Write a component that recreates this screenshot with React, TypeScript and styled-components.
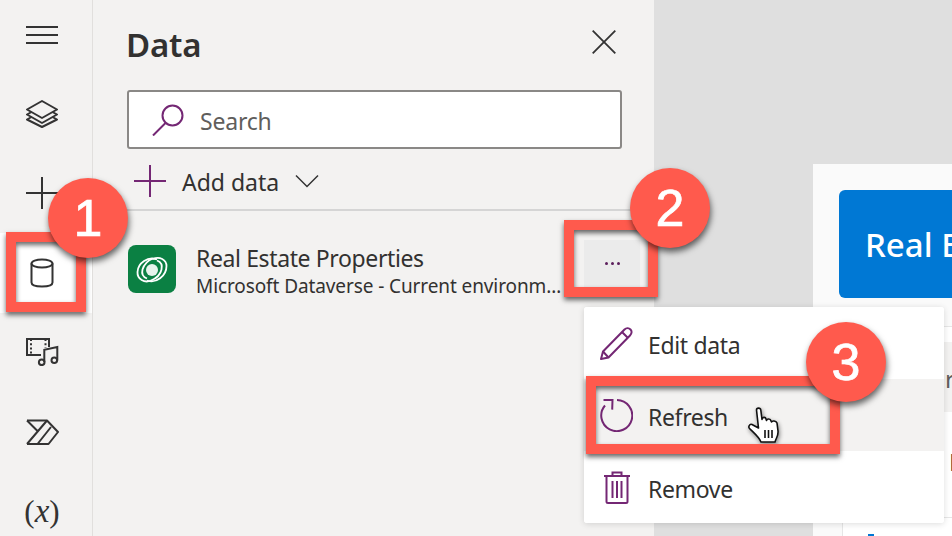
import React from 'react';
import styled, {createGlobalStyle} from 'styled-components';

const GlobalStyle = createGlobalStyle`
html, body {
    margin: 0;
    padding: 0;
    height: 536px;
    overflow: hidden;
    background: #dfdfdf;
    font-family: "Noto Sans", "Open Sans", sans-serif;
    color: #323130;
}
* { box-sizing: border-box; }
`

const INK = '#333333';
const PURPLE = '#742774';

const HamburgerIcon = () => (
    <svg width="32" height="18" viewBox="0 0 32 18" fill="none" stroke={INK} strokeWidth="1.8">
        <path d="M0 1h32M0 9h32M0 17h32"/>
    </svg>
);
const LayersIcon = () => (
    <svg width="32" height="28" viewBox="0 0 32 28" fill="none" stroke={INK} strokeWidth="2" strokeLinejoin="round">
        <path d="M16 1 31 9.500 16 18 1 9.500z"/>
        <path d="M5.500 12 1 14.500 16 23l15-8.500-4.500-2.500"/>
        <path d="M5.500 17 1 19.500 16 27l15-7.500-4.500-2.500"/>
    </svg>
);
const PlusIcon = ({color = INK}: {color?: string}) => (
    <svg width="32" height="32" viewBox="0 0 32 32" fill="none" stroke={color} strokeWidth="2">
        <path d="M0 16h32M16 0v32"/>
    </svg>
);
const CylinderIcon = () => (
    <svg width="24" height="30" viewBox="0 0 24 30" fill="none" stroke={INK} strokeWidth="2">
        <ellipse cx="12" cy="5.500" rx="10.500" ry="4"/>
        <path d="M1.500 5.500v19c0 2.500 4.500 4 10.500 4s10.500-1.500 10.500-4v-19"/>
    </svg>
);
const MediaIcon = () => (
    <svg width="33" height="28" viewBox="0 0 33 28" fill="none" stroke={INK} strokeWidth="2">
        <path d="M23 9V1H1v16h14"/>
        <path d="M5 1v16M19.500 1v9" strokeDasharray="2 2.200"/>
        <circle cx="15.700" cy="24.300" r="2.800"/>
        <circle cx="28.300" cy="22.300" r="2.800"/>
        <path d="M18.300 24V11.700L31.300 9v13.500"/>
    </svg>
);
const FlowIcon = () => (
    <svg width="33" height="26" viewBox="0 0 33 26" fill="none" stroke={INK} strokeWidth="2" strokeLinejoin="round">
        <path d="M1 1.500h20L32 13l-9.500 12H1"/>
        <path d="M1 1.500 12.500 13M21 1.500 1 25M11.500 25 25 8"/>
    </svg>
);
const SearchIcon = () => (
    <svg width="32" height="32" viewBox="0 0 32 32" fill="none" stroke={PURPLE} strokeWidth="2">
        <circle cx="20.500" cy="11.500" r="10"/>
        <path d="M13.500 19 1 31.500"/>
    </svg>
);
const ChevronIcon = () => (
    <svg width="24" height="14" viewBox="0 0 24 14" fill="none" stroke={INK} strokeWidth="1.500">
        <path d="M1 1.500 12 12.500 23 1.500"/>
    </svg>
);
const CloseIcon = () => (
    <svg width="24" height="24" viewBox="0 0 24 24" fill="none" stroke={INK} strokeWidth="1.800">
        <path d="M.7.7l22.600 22.600M23.300.7.700 23.300"/>
    </svg>
);
const DataverseLogo = () => (
    <svg width="48" height="48" viewBox="0 0 48 48" fill="none">
        <rect width="48" height="48" rx="8" fill="#0b8043"/>
        <circle cx="24" cy="25" r="6" fill="#fff" fillOpacity=".9"/>
        <g stroke="#fff" strokeWidth="1.800" fill="none">
            <path d="M29 14.500C20 11 10 18 9.500 27c-.4 7 7 11.500 13.500 8.500"/>
            <path d="M19 35.500C28 39 38.500 31 38.500 21c0-6.500-7-10-13.500-7"/>
            <path d="M25 13.500c-5 2-9 6-10.500 11-1 4 .5 7.500 4.500 9M23 35.500c5-2 9.500-6 10.500-11 1-4-.5-7.500-4.500-9"/>
        </g>
    </svg>
);
const PencilIcon = () => (
    <svg width="33" height="33" viewBox="0 0 33 33" fill="none" stroke={PURPLE} strokeWidth="2" strokeLinejoin="round">
        <path d="M8.500 30.500 1 32l2-7.500L24.500 2.500c2-2 4.500-1.500 6 0s1.500 4-.500 6z"/>
        <path d="M3 24.500 8.500 30.500M22 5l6 6"/>
    </svg>
);
const RefreshIcon = () => (
    <svg width="33" height="33" viewBox="0 0 33 33" fill="none" stroke={PURPLE} strokeWidth="2">
        <path d="M17 1.100A15.500 15.500 0 1 1 5 6.500"/>
        <path d="M3.500 1.100h9l-.300 9.500"/>
    </svg>
);
const TrashIcon = () => (
    <svg width="28" height="33" viewBox="0 0 28 33" fill="none" stroke={PURPLE} strokeWidth="2">
        <path d="M1 5h26M9.500 5V1.500h9V5M3.500 5v25.500c0 1 .7 1.500 1.500 1.500h18c.8 0 1.500-.5 1.500-1.500V5"/>
        <path d="M9.500 10v17M14 10v17M18.500 10v17"/>
    </svg>
);
const HandCursor = () => (
    <svg width="33" height="37" viewBox="0 0 33 37" fill="#fff" stroke="#111" strokeWidth="1.600" strokeLinejoin="round">
        <path d="M8.500 3C8.500.5 12.500.5 12.800 3L14 12.500C14 10 17.500 9.500 18 12l.5 1.500C19 11.500 22.500 11.500 23 14l.5 1C24 13.500 28 13.500 29 16l1 8c.5 5-2 7-3 11H13C11 30 6 26 1.500 21.500 0 20 1.500 16.500 4 17.500l6.500 3.500z"/>
        <path d="M17 23v8M20.500 23v8M24 23v8" fill="none"/>
    </svg>
);

const VarIcon = () => <StyledVar>(<StyledX>x</StyledX>)</StyledVar>;

const railItems = [
    {id: 'menu', icon: <HamburgerIcon/>},
    {id: 'layers', icon: <LayersIcon/>},
    {id: 'insert', icon: <PlusIcon/>},
    {id: 'data', icon: <CylinderIcon/>, active: true},
    {id: 'media', icon: <MediaIcon/>},
    {id: 'flow', icon: <FlowIcon/>},
    {id: 'vars', icon: <VarIcon/>},
];

const menuItems = [
    {id: 'edit', label: 'Edit data', icon: <PencilIcon/>},
    {id: 'refresh', label: 'Refresh', icon: <RefreshIcon/>, hover: true},
    {id: 'remove', label: 'Remove', icon: <TrashIcon/>},
];

export default function App() {
    return (
        <Page>
            <GlobalStyle/>
            <Rail>
                {railItems.map(item => (
                    <RailButton key={item.id} $active={item.active}>{item.icon}</RailButton>
                ))}
            </Rail>
            <Panel>
                <PanelHeader>
                    <PanelTitle>Data</PanelTitle>
                    <CloseIcon/>
                </PanelHeader>
                <SearchBox>
                    <SearchIcon/>
                    <SearchText>Search</SearchText>
                </SearchBox>
                <AddRow>
                    <PlusIcon color={PURPLE}/>
                    <AddText>Add data</AddText>
                    <ChevronIcon/>
                </AddRow>
                <DataRow>
                    <LogoSlot><DataverseLogo/></LogoSlot>
                    <DataText>
                        <DataTitle>Real Estate Properties</DataTitle>
                        <DataSub>Microsoft Dataverse - Current environment</DataSub>
                    </DataText>
                    <MoreButton>
                        <Dot/><Dot/><Dot/>
                    </MoreButton>
                </DataRow>
            </Panel>
            <Canvas>
                <AppCard>
                    <AppHeader>Real Estate Properties</AppHeader>
                    <Gallery>
                        <GalleryBand>re</GalleryBand>
                        <GalleryLetter>N</GalleryLetter>
                        <GalleryBottom><BlueMark/></GalleryBottom>
                    </Gallery>
                </AppCard>
            </Canvas>
            <Menu>
                {menuItems.map(item => (
                    <MenuRow key={item.id} $hover={item.hover}>
                        <MenuIcon>{item.icon}</MenuIcon>
                        <MenuLabel>{item.label}</MenuLabel>
                    </MenuRow>
                ))}
            </Menu>
            <CursorSpot><HandCursor/></CursorSpot>
            <Frame $x={6} $y={232} $w={80} $h={80}/>
            <Frame $x={564} $y={220} $w={94} $h={77}/>
            <Frame $x={586} $y={376} $w={254} $h={78}/>
            <Badge $x={48} $y={178}>1</Badge>
            <Badge $x={630} $y={168}>2</Badge>
            <Badge $x={806} $y={322}>3</Badge>
        </Page>
    );
}

const Page = styled.div`
position: relative;
display: flex;
width: 952px;
height: 536px;
overflow: hidden;
background: #dfdfdf;
`

const Rail = styled.nav`
flex: 0 0 93px;
height: 536px;
overflow: hidden;
background: #f3f2f1;
border-right: 1px solid #e1dfdd;
`

const RailButton = styled.div<{$active?: boolean}>`
display: flex;
align-items: center;
justify-content: center;
height: 79.4px;
padding-right: 8px;
background: ${p => (p.$active ? '#ffffff' : 'transparent')};
&:first-child {
    margin-top: -5px;
}
`

const StyledVar = styled.span`
font-family: "Liberation Serif", serif;
font-size: 31px;
color: ${INK};
white-space: nowrap;
`

const StyledX = styled.i`
font-size: 33px;
`

const Panel = styled.section`
flex: 0 0 561px;
height: 536px;
background: #f3f2f1;
`

const PanelHeader = styled.header`
display: flex;
align-items: center;
justify-content: space-between;
height: 90px;
padding: 0 38px 6px 34px;
`

const PanelTitle = styled.h1`
margin: 4px 0 0 -1px;
font-size: 33px;
font-weight: 600;
letter-spacing: -0.2px;
color: #323130;
`

const SearchBox = styled.div`
display: flex;
align-items: center;
gap: 16px;
width: 495px;
height: 59px;
margin-left: 34px;
padding-left: 23px;
background: #fff;
border: 2px solid #8a8886;
border-radius: 3px;
`

const SearchText = styled.span`
padding-top: 3px;
font-size: 23px;
letter-spacing: -0.2px;
color: #605e5c;
`

const AddRow = styled.div`
display: flex;
align-items: center;
height: 62px;
padding: 3px 0 0 41px;
border-bottom: 2px solid #d5d5d5;
`

const AddText = styled.span`
margin: 0 16px;
padding-top: 2px;
font-size: 23px;
color: #323130;
`

const DataRow = styled.div`
display: flex;
align-items: flex-start;
padding: 30px 0 0 35px;
`

const LogoSlot = styled.div`
flex: none;
margin-top: 4px;
height: 48px;
`

const DataText = styled.div`
width: 368px;
margin: 2px 20px 0 20px;
`

const DataTitle = styled.div`
font-size: 23px;
line-height: 30px;
letter-spacing: -0.38px;
color: #323130;
`

const DataSub = styled.div`
overflow: hidden;
font-size: 19px;
line-height: 26px;
letter-spacing: -0.1px;
color: #323130;
white-space: nowrap;
text-overflow: ellipsis;
`

const MoreButton = styled.div`
display: flex;
align-items: center;
justify-content: center;
gap: 3px;
width: 56px;
height: 47px;
margin-top: -1px;
background: #ebebeb;
`

const Dot = styled.i`
width: 3px;
height: 3px;
border-radius: 50%;
background: #5c1e5c;
`

const Canvas = styled.main`
flex: 1;
height: 536px;
padding: 164px 0 0 159px;
`

const AppCard = styled.div`
width: 400px;
height: 372px;
padding: 26px 0 0 26px;
background: #fafafa;
`

const AppHeader = styled.div`
display: flex;
align-items: center;
height: 108px;
padding-left: 26px;
border-radius: 6px 0 0 6px;
background: #0078d4;
color: #fff;
font-size: 33px;
font-weight: 500;
white-space: nowrap;
overflow: hidden;
`

const Gallery = styled.div`
height: 300px;
margin: 28px 0 0 3px;
padding-top: 15px;
background: #fff;
border-top: 1px solid #e6e6e6;
border-left: 1px solid #e6e6e6;
`

const GalleryBand = styled.div`
height: 70px;
padding: 20px 0 0 102px;
background: #f3f2f1;
font-size: 24px;
color: #605e5c;
`

const GalleryLetter = styled.div`
height: 105px;
padding: 36px 0 0 106px;
font-size: 24px;
line-height: 28px;
color: #323130;
`

const GalleryBottom = styled.div`
height: 40px;
padding: 16px 0 0 25px;
border-top: 1px solid #e6e6e6;
`

const BlueMark = styled.div`
width: 6px;
height: 10px;
background: #0078d4;
`

const Menu = styled.div`
position: absolute;
left: 584px;
top: 307px;
width: 360px;
background: #fff;
border-radius: 3px;
overflow: hidden;
box-shadow: 0 1px 6px rgba(0, 0, 0, 0.14);
`

const MenuRow = styled.div<{$hover?: boolean}>`
display: flex;
align-items: center;
height: 72px;
padding-left: 16px;
background: ${p => (p.$hover ? '#f3f2f1' : '#fff')};
font-size: 23px;
color: #323130;
`

const MenuIcon = styled.span`
display: flex;
justify-content: center;
flex: 0 0 33px;
margin-right: 15px;
`

const MenuLabel = styled.span`
padding-top: 3px;
letter-spacing: -0.35px;
`

const CursorSpot = styled.div`
position: absolute;
left: 748px;
top: 407px;
filter: drop-shadow(1px 2px 2px rgba(0, 0, 0, 0.45));
line-height: 0;
`

const Frame = styled.div<{$x: number; $y: number; $w: number; $h: number}>`
position: absolute;
left: ${p => p.$x}px;
top: ${p => p.$y}px;
width: ${p => p.$w}px;
height: ${p => p.$h}px;
border: 10px solid #ff5a4d;
box-shadow: 0 3px 5px rgba(0, 0, 0, 0.6), inset 0 3px 5px rgba(0, 0, 0, 0.6);
`

const Badge = styled.div<{$x: number; $y: number}>`
position: absolute;
left: ${p => p.$x}px;
top: ${p => p.$y}px;
display: flex;
align-items: center;
justify-content: center;
width: 80px;
height: 80px;
border-radius: 50%;
background: #ff5a4d;
box-shadow: 1px 4px 6px rgba(0, 0, 0, 0.6);
color: #fff;
font-family: "Liberation Sans", sans-serif;
font-size: 52px;
-webkit-text-stroke: 0.7px #fff;
`
